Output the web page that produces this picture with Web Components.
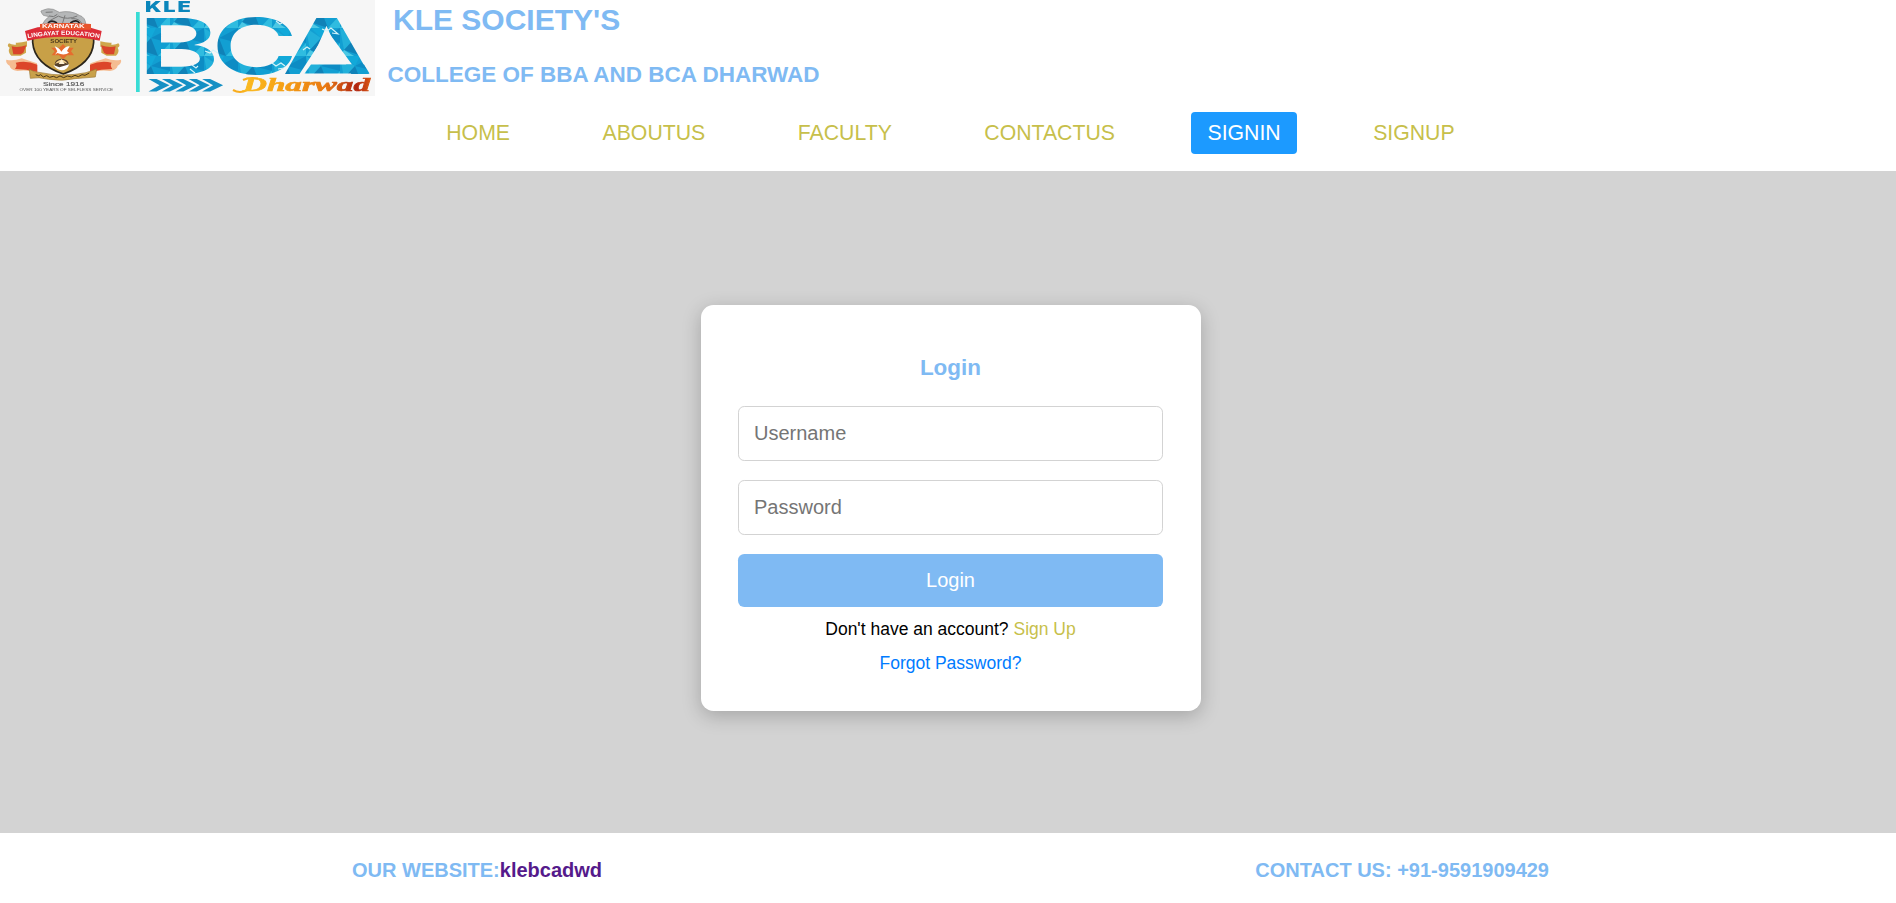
<!DOCTYPE html>
<html lang="en">
<head>
<meta charset="utf-8">
<title>KLE Society's BCA Dharwad - Login</title>
<style>
html,body{margin:0;height:100%;overflow:hidden}
body{font-family:"Liberation Sans",Arial,sans-serif;background:#fff}
</style>
</head>
<body>
<kle-page></kle-page>
<script>
const define=(name,html)=>customElements.define(name,class extends HTMLElement{
  constructor(){super();this.attachShadow({mode:'open'}).innerHTML=html;}
});

define('kle-logo',`
<style>:host{display:block;width:375px;height:96px;background:#f6f6f6}svg{display:block;filter:blur(.35px)}</style>
<svg width="375" height="96" viewBox="0 0 375 96">
<defs>
<pattern id="tri" width="34" height="28" patternUnits="userSpaceOnUse">
<rect width="34" height="28" fill="#129fd2"/>
<path d="M0 0L15 10 4 22Z" fill="#22b0da"/><path d="M15 10L34 0V15Z" fill="#0d8cc4"/>
<path d="M15 10L4 22 22 28Z" fill="#0f82b8"/><path d="M34 15L22 28H34Z" fill="#2fbce0"/>
<path d="M5 0H20L15 10Z" fill="#12a9d9"/><path d="M0 28L4 22 14 28Z" fill="#4cc8e4"/>
</pattern>
<linearGradient id="fire"><stop offset="0" stop-color="#fbbd22"/><stop offset=".3" stop-color="#f6a214"/><stop offset=".65" stop-color="#e87812"/><stop offset=".88" stop-color="#b0240f"/><stop offset="1" stop-color="#dc5a14"/></linearGradient>
<path id="arc" d="M77 115Q190 94 304 115"/>
<g id="ribbons">
<path d="M27 130Q43 140 78 126V158L62 167H34Q22 155 29 143Q19 138 27 130Z" fill="#cfa64b"/><path d="M47 128Q62 129 81 124V140H50Z" fill="#cfa64b"/><path d="M35 139Q55 144 79 136L70 158L62 163H40Z" fill="#d9452b"/>
<path d="M19 179Q40 184 65 175L111 190V218Q82 209 52 213Q30 208 29 197Q16 190 19 179Z" fill="#f5bc91"/><path d="M47 188Q79 180 112 194V216Q78 207 45 207Q53 196 47 188Z" fill="#dc4529"/>
</g>
</defs>
<g transform="scale(.3333)">
<g stroke="#8b8b8b" stroke-width="2">
<path d="M125 39Q119 32 128 31Q142 23 160 28L178 37Q213 30 238 46Q256 51 258 75H126Q135 57 147 50L130 46Z" fill="#b5b7b8"/>
<path d="M147 48Q162 54 172 43M176 49Q202 61 232 48M151 61L176 48M195 46L187 72M214 56Q240 54 246 73M137 37L158 36" fill="none" stroke="#777" stroke-width="3"/>
<path d="M144 69Q154 58 171 69M211 69Q230 56 239 70" fill="none" stroke="#222" stroke-width="5"/>
</g>
<use href="#ribbons"/><use href="#ribbons" transform="translate(382 0) scale(-1 1)"/>
<path d="M98 101H281V127Q277 191 190 222Q103 192 98 127Z" fill="#c8a047" stroke="#2c261b" stroke-width="5"/>
<path d="M75 93L113 82Q190 76 267 82L305 93L299 122Q190 98 82 122Z" fill="#dc2c37"/>
<path d="M120 72Q190 66 273 72V89H120Z" fill="#e8542c"/>
<path d="M189 132L200 143H221L213 154L222 166H201L190 178L177 166H155L164 154L153 143H178Z" fill="#e66c2e"/>
<path d="M164 139Q179 145 184 155Q196 138 209 139L201 153L207 158Q193 168 172 159L165 164L172 154Z" fill="#fff"/>
<ellipse cx="185" cy="192" rx="21" ry="16" fill="#56412c"/><path d="M165 191Q185 168 203 191Q187 182 165 191Z" fill="#f4d390"/><path d="M185 177L194 192H176Z" fill="#fff1d0"/><path d="M160 195L178 202 188 199 208 193Q201 212 184 211Q170 209 160 195Z" fill="#fff"/>
<path d="M88 208Q101 217 123 218Q188 232 258 218L290 207L286 231Q238 235 225 236Q188 244 145 238Q117 230 91 235Z" fill="#c9a14a" stroke="#9c7836" stroke-width="2"/>
<path d="M107 224l9 3 6-3 8 7 10-4 9 5 11-3 10 4 10-5 11 5 11-5 12 3 11-5 10 4 11-6 9 2 13-7" fill="none" stroke="#493719" stroke-width="3"/>
<g font-family="Liberation Sans,sans-serif" text-anchor="middle" font-weight="700">
<text x="190" y="85" font-size="16" fill="#fff" textLength="128" lengthAdjust="spacingAndGlyphs">KARNATAK</text>
<text font-size="18" fill="#fff" textLength="216" lengthAdjust="spacingAndGlyphs"><textPath href="#arc" startOffset="50%">LINGAYAT EDUCATION</textPath></text>
<text x="191" y="128" font-size="14" fill="#4c391b" textLength="80" lengthAdjust="spacingAndGlyphs">SOCIETY</text>
<text x="191" y="258" font-size="16" font-weight="400" stroke="#666" stroke-width=".5" fill="#555" textLength="124" lengthAdjust="spacingAndGlyphs">Since 1916</text>
<text x="199" y="274" font-size="11" font-weight="400" fill="#555" textLength="281" lengthAdjust="spacingAndGlyphs">OVER 100 YEARS OF SELFLESS SERVICE</text>
</g></g>
<rect x="136" y="12" width="3.7" height="80" fill="#38dcd5"/>
<g fill="url(#tri)" font-family="Inter,sans-serif">
<text x="145" y="12" font-size="14.5" font-weight="900" letter-spacing="1.2" textLength="47.5" lengthAdjust="spacingAndGlyphs" fill="#0b86bb">KLE</text>
<text x="136.5" y="73.5" font-size="77" font-weight="500" textLength="84" lengthAdjust="spacingAndGlyphs">B</text>
<text x="211" y="73.5" font-size="77" font-weight="500" textLength="87" lengthAdjust="spacingAndGlyphs">C</text>
<text x="282" y="73.5" font-size="77" font-weight="600" textLength="90" lengthAdjust="spacingAndGlyphs">A</text>
<path d="M327.5 31L352 64.5H310L303 74H299.5Z" fill="#f6f6f6"/>
<path d="M311 64.5H364L369.5 73.5H304.5Z"/>
</g>
<path d="M192 65l4 3 2-2M205 51l5 2 3-3 5 3M190 69l5 4M276 21l4 3 2-1M322 29l5 2 4-3 7 6-6-1M303 50l4-3 3 2M272 63l4 3 5-3 4 3M278 69l6-1" fill="none" stroke="#d4f4fa" stroke-width="1.1"/>
<g fill="#1590c4"><path id="ch" d="M148.500 79h8l13 6.300-13 6.300h-8l11-6.300z"/><use href="#ch" x="13.400"/><use href="#ch" x="26.800"/><use href="#ch" x="40.200"/><use href="#ch" x="53.600"/></g>
<path d="M233 90Q240 94 247 90M243 80Q249 77 258 78.500" fill="none" stroke="#f8ad1d" stroke-width="2.200"/>
<text x="243" y="91" font-family="Liberation Serif,serif" font-style="italic" font-weight="700" font-size="18" fill="url(#fire)" stroke="url(#fire)" stroke-width=".6" textLength="127" lengthAdjust="spacingAndGlyphs">Dharwad</text>
</svg>`);

define('kle-nav-item',`
<style>:host{display:block}a{display:block;padding:0 16.25px;height:42px;line-height:42px;font-size:21.25px;color:#c7bf4b;text-decoration:none;border-radius:4px;white-space:nowrap}
:host([active]) a{background:#1c9aff;color:#fff}</style><a href="#"><slot></slot></a>`);

define('kle-header',`
<style>:host{display:flex;flex-direction:column;height:171px;background:#fff;color:#7fbaf3}
.top{display:flex;height:96px}
h1,h2{margin:0;white-space:nowrap}
.names{padding:2px 0 0 12.5px}
h1{font-size:30px;line-height:36px;padding-left:5.5px}
h2{font-size:22.5px;line-height:28px;margin-top:23px}
nav{display:flex;gap:60px;margin:16px 0 0 430px}</style>
<div class="top"><kle-logo></kle-logo><div class="names"><h1>KLE SOCIETY'S</h1><h2>COLLEGE OF BBA AND BCA DHARWAD</h2></div></div>
<nav><kle-nav-item>HOME</kle-nav-item><kle-nav-item>ABOUTUS</kle-nav-item><kle-nav-item>FACULTY</kle-nav-item><kle-nav-item>CONTACTUS</kle-nav-item><kle-nav-item active>SIGNIN</kle-nav-item><kle-nav-item>SIGNUP</kle-nav-item></nav>`);

customElements.define('kle-field',class extends HTMLElement{
  constructor(){super();this.attachShadow({mode:'open'}).innerHTML=`
<style>:host{display:block;margin-bottom:19px}input{display:block;box-sizing:border-box;width:100%;height:55px;border:1px solid #d3d3d3;border-radius:6.25px;padding:0 15px;font:20px "Liberation Sans",Arial,sans-serif;background:#fff;outline:0}input::placeholder{color:#757575;opacity:1}</style><input>`;}
  connectedCallback(){const i=this.shadowRoot.querySelector('input');i.type=this.getAttribute('type')||'text';i.placeholder=this.getAttribute('label');}
});

define('kle-login-card',`
<style>:host{display:block;box-sizing:border-box;width:500px;height:406px;padding:49px 38px 0 37px;border-radius:12.5px;background:#fff;box-shadow:0 5px 18.75px rgba(0,0,0,.22);text-align:center}
h2{margin:0 0 24px;font-size:22.5px;line-height:28px;color:#7fbaf3}
button{display:block;width:100%;height:53px;border:0;border-radius:6.25px;background:#7fbaf3;color:#fff;font:20px "Liberation Sans",Arial,sans-serif;padding:0}
p{margin:0;font-size:17.5px;line-height:34px;color:#000}.first{margin-top:5px}
a{text-decoration:none;color:#c7bf4b}.forgot{color:#007bff}</style>
<h2>Login</h2><kle-field label="Username"></kle-field><kle-field type="password" label="Password"></kle-field>
<button>Login</button><p class="first">Don't have an account? <a href="#">Sign Up</a></p><p><a class="forgot" href="#">Forgot Password?</a></p>`);

define('kle-footer',`
<style>:host{display:flex;justify-content:space-between;box-sizing:border-box;height:70px;padding:25px 347px 0 352px;background:#fff;color:#7fbaf3;font-size:20px;font-weight:700;line-height:24px;white-space:nowrap}
a{color:#551a8b;text-decoration:none}</style>
<div>OUR WEBSITE:<a href="#">klebcadwd</a></div><div>CONTACT US: +91-9591909429</div>`);

define('kle-page',`
<style>:host{display:flex;flex-direction:column;height:903px}main{flex:none;box-sizing:border-box;height:662px;background:#d3d3d3;padding:134px 0 0 701px}</style>
<kle-header></kle-header><main><kle-login-card></kle-login-card></main><kle-footer></kle-footer>`);
</script>
</body>
</html>
